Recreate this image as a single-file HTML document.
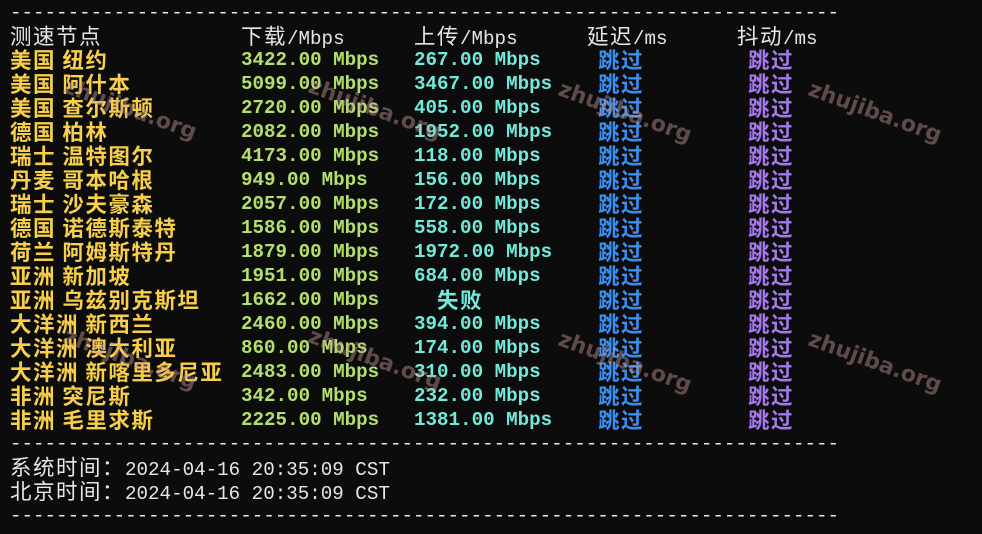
<!DOCTYPE html>
<html><head><meta charset="utf-8"><style>
body{margin:0;width:982px;height:534px;background:#0c0c0c;overflow:hidden;position:relative;font-family:"Liberation Mono","Noto Sans CJK SC",monospace;font-size:19.2px;}
.r{position:absolute;white-space:pre;line-height:24px;height:24px;}
.k{font-family:"Noto Sans CJK SC",sans-serif;font-size:21.5px;letter-spacing:1.5px;}
.w{color:#e6e6e6}.y{color:#f7cf4a;font-weight:bold}.g{color:#b3e06c;font-weight:bold}.c{color:#72eadb;font-weight:bold}.b{color:#3a8ff0;font-weight:bold}.p{color:#a777ee;font-weight:bold}
.wm{position:absolute;font-family:"DejaVu Sans",sans-serif;font-weight:bold;font-size:22px;color:rgba(200,150,150,0.45);transform:rotate(20deg);white-space:nowrap;}
</style></head><body>
<div class="r w" style="left:10px;top:1px">------------------------------------------------------------------------</div>
<div class="r w" style="left:10px;top:24px"><span class="k">测速节点</span></div>
<div class="r w" style="left:241px;top:24px"><span class="k">下载</span>/Mbps</div>
<div class="r w" style="left:414px;top:24px"><span class="k">上传</span>/Mbps</div>
<div class="r w" style="left:587px;top:24px"><span class="k">延迟</span>/ms</div>
<div class="r w" style="left:737px;top:24px"><span class="k">抖动</span>/ms</div>
<div class="r w" style="left:10px;top:432px">------------------------------------------------------------------------</div>
<div class="r w" style="left:10px;top:455px"><span class="k">系统时间：</span>2024-04-16 20:35:09 CST</div>
<div class="r w" style="left:10px;top:479px"><span class="k">北京时间：</span>2024-04-16 20:35:09 CST</div>
<div class="r w" style="left:10px;top:504px">------------------------------------------------------------------------</div>

<div class="r y" style="left:10px;top:48px"><span class="k">美国 纽约</span></div><div class="r g" style="left:241px;top:48px">3422.00 Mbps</div><div class="r c" style="left:414px;top:48px">267.00 Mbps</div><div class="r b k" style="left:598px;top:48px">跳过</div><div class="r p k" style="left:748px;top:48px">跳过</div>
<div class="r y" style="left:10px;top:72px"><span class="k">美国 阿什本</span></div><div class="r g" style="left:241px;top:72px">5099.00 Mbps</div><div class="r c" style="left:414px;top:72px">3467.00 Mbps</div><div class="r b k" style="left:598px;top:72px">跳过</div><div class="r p k" style="left:748px;top:72px">跳过</div>
<div class="r y" style="left:10px;top:96px"><span class="k">美国 查尔斯顿</span></div><div class="r g" style="left:241px;top:96px">2720.00 Mbps</div><div class="r c" style="left:414px;top:96px">405.00 Mbps</div><div class="r b k" style="left:598px;top:96px">跳过</div><div class="r p k" style="left:748px;top:96px">跳过</div>
<div class="r y" style="left:10px;top:120px"><span class="k">德国 柏林</span></div><div class="r g" style="left:241px;top:120px">2082.00 Mbps</div><div class="r c" style="left:414px;top:120px">1952.00 Mbps</div><div class="r b k" style="left:598px;top:120px">跳过</div><div class="r p k" style="left:748px;top:120px">跳过</div>
<div class="r y" style="left:10px;top:144px"><span class="k">瑞士 温特图尔</span></div><div class="r g" style="left:241px;top:144px">4173.00 Mbps</div><div class="r c" style="left:414px;top:144px">118.00 Mbps</div><div class="r b k" style="left:598px;top:144px">跳过</div><div class="r p k" style="left:748px;top:144px">跳过</div>
<div class="r y" style="left:10px;top:168px"><span class="k">丹麦 哥本哈根</span></div><div class="r g" style="left:241px;top:168px">949.00 Mbps</div><div class="r c" style="left:414px;top:168px">156.00 Mbps</div><div class="r b k" style="left:598px;top:168px">跳过</div><div class="r p k" style="left:748px;top:168px">跳过</div>
<div class="r y" style="left:10px;top:192px"><span class="k">瑞士 沙夫豪森</span></div><div class="r g" style="left:241px;top:192px">2057.00 Mbps</div><div class="r c" style="left:414px;top:192px">172.00 Mbps</div><div class="r b k" style="left:598px;top:192px">跳过</div><div class="r p k" style="left:748px;top:192px">跳过</div>
<div class="r y" style="left:10px;top:216px"><span class="k">德国 诺德斯泰特</span></div><div class="r g" style="left:241px;top:216px">1586.00 Mbps</div><div class="r c" style="left:414px;top:216px">558.00 Mbps</div><div class="r b k" style="left:598px;top:216px">跳过</div><div class="r p k" style="left:748px;top:216px">跳过</div>
<div class="r y" style="left:10px;top:240px"><span class="k">荷兰 阿姆斯特丹</span></div><div class="r g" style="left:241px;top:240px">1879.00 Mbps</div><div class="r c" style="left:414px;top:240px">1972.00 Mbps</div><div class="r b k" style="left:598px;top:240px">跳过</div><div class="r p k" style="left:748px;top:240px">跳过</div>
<div class="r y" style="left:10px;top:264px"><span class="k">亚洲 新加坡</span></div><div class="r g" style="left:241px;top:264px">1951.00 Mbps</div><div class="r c" style="left:414px;top:264px">684.00 Mbps</div><div class="r b k" style="left:598px;top:264px">跳过</div><div class="r p k" style="left:748px;top:264px">跳过</div>
<div class="r y" style="left:10px;top:288px"><span class="k">亚洲 乌兹别克斯坦</span></div><div class="r g" style="left:241px;top:288px">1662.00 Mbps</div><div class="r c k" style="left:437px;top:288px">失败</div><div class="r b k" style="left:598px;top:288px">跳过</div><div class="r p k" style="left:748px;top:288px">跳过</div>
<div class="r y" style="left:10px;top:312px"><span class="k">大洋洲 新西兰</span></div><div class="r g" style="left:241px;top:312px">2460.00 Mbps</div><div class="r c" style="left:414px;top:312px">394.00 Mbps</div><div class="r b k" style="left:598px;top:312px">跳过</div><div class="r p k" style="left:748px;top:312px">跳过</div>
<div class="r y" style="left:10px;top:336px"><span class="k">大洋洲 澳大利亚</span></div><div class="r g" style="left:241px;top:336px">860.00 Mbps</div><div class="r c" style="left:414px;top:336px">174.00 Mbps</div><div class="r b k" style="left:598px;top:336px">跳过</div><div class="r p k" style="left:748px;top:336px">跳过</div>
<div class="r y" style="left:10px;top:360px"><span class="k">大洋洲 新喀里多尼亚</span></div><div class="r g" style="left:241px;top:360px">2483.00 Mbps</div><div class="r c" style="left:414px;top:360px">310.00 Mbps</div><div class="r b k" style="left:598px;top:360px">跳过</div><div class="r p k" style="left:748px;top:360px">跳过</div>
<div class="r y" style="left:10px;top:384px"><span class="k">非洲 突尼斯</span></div><div class="r g" style="left:241px;top:384px">342.00 Mbps</div><div class="r c" style="left:414px;top:384px">232.00 Mbps</div><div class="r b k" style="left:598px;top:384px">跳过</div><div class="r p k" style="left:748px;top:384px">跳过</div>
<div class="r y" style="left:10px;top:408px"><span class="k">非洲 毛里求斯</span></div><div class="r g" style="left:241px;top:408px">2225.00 Mbps</div><div class="r c" style="left:414px;top:408px">1381.00 Mbps</div><div class="r b k" style="left:598px;top:408px">跳过</div><div class="r p k" style="left:748px;top:408px">跳过</div>

<div class="wm" style="left:60px;top:97px">zhujiba.org</div>
<div class="wm" style="left:305px;top:97px">zhujiba.org</div>
<div class="wm" style="left:555px;top:100px">zhujiba.org</div>
<div class="wm" style="left:805px;top:100px">zhujiba.org</div>
<div class="wm" style="left:60px;top:347px">zhujiba.org</div>
<div class="wm" style="left:305px;top:347px">zhujiba.org</div>
<div class="wm" style="left:555px;top:350px">zhujiba.org</div>
<div class="wm" style="left:805px;top:350px">zhujiba.org</div>
</body></html>
